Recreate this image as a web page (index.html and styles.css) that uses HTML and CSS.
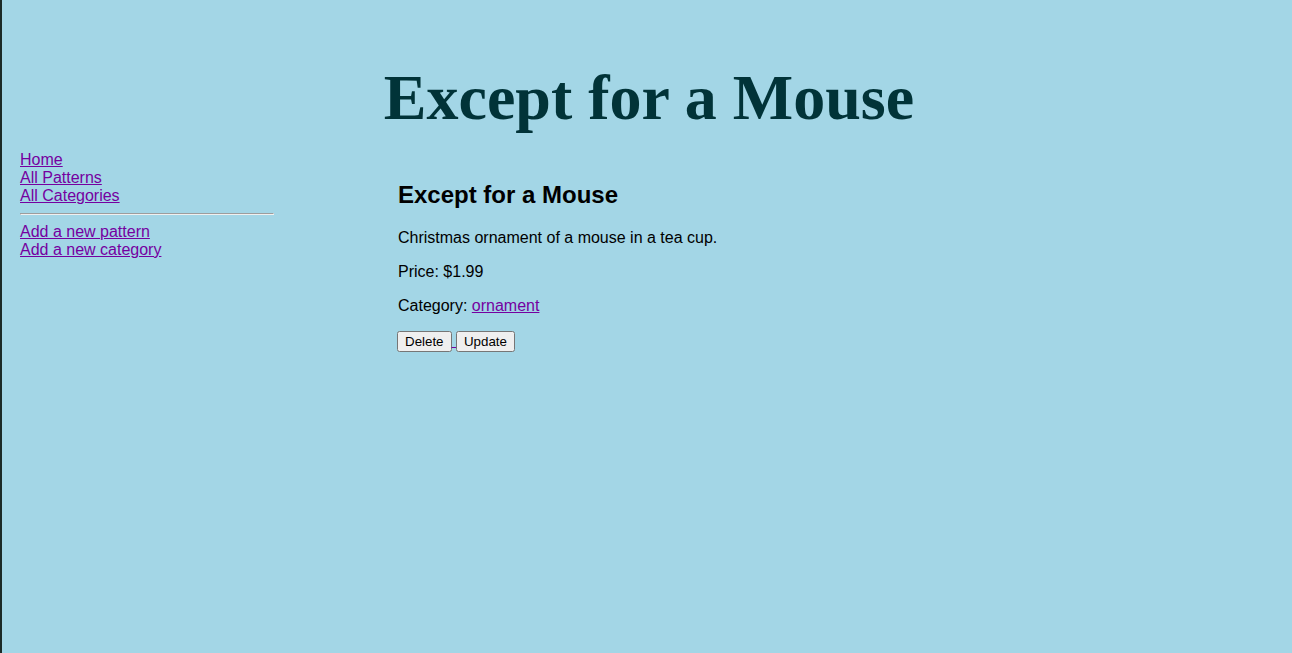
FILE: index.html
```html
<!DOCTYPE html>
<html lang="en">
<head>
<meta charset="utf-8">
<title>Except for a Mouse</title>
<link rel="stylesheet" href="styles.css">
</head>
<body>
<header class="site-header">
  <h1 class="site-title">Except for a Mouse</h1>
</header>
<div class="layout">
  <nav class="sidebar">
    <a class="nav-link" href="#">Home</a>
    <a class="nav-link" href="#">All Patterns</a>
    <a class="nav-link" href="#">All Categories</a>
    <hr class="nav-rule">
    <a class="nav-link" href="#">Add a new pattern</a>
    <a class="nav-link" href="#">Add a new category</a>
  </nav>
  <main class="content">
    <h2 class="pattern-title">Except for a Mouse</h2>
    <p class="pattern-text">Christmas ornament of a mouse in a tea cup.</p>
    <p class="pattern-text">Price: $1.99</p>
    <p class="pattern-text">Category: <a class="link" href="#">ornament</a></p>
    <div class="actions"><button class="btn" type="button">Delete</button><a class="link" href="#"> <button class="btn" type="button">Update</button></a></div>
  </main>
</div>
</body>
</html>
```

FILE: styles.css
```css
html {
  background: #a3d6e6;
  min-height: 100%;
}
body {
  margin: 0;
  min-height: 653px;
  border-left: 2px solid #1c2a27;
  font-family: "Liberation Sans", Arial, sans-serif;
  font-size: 16px;
  color: #000;
}
.site-header {
  text-align: center;
  padding-left: 4px;
}
.site-title {
  margin: 61px 0 15px;
  font-family: "Liberation Serif", "Times New Roman", serif;
  font-size: 64px;
  font-weight: bold;
  color: #013338;
}
.layout {
  display: grid;
  grid-template-columns: 254px 1fr;
  column-gap: 124px;
  padding-left: 18px;
}
.sidebar {
  display: flex;
  flex-direction: column;
  align-items: flex-start;
  padding-top: 1px;
}
.nav-link, .link {
  color: #7500a0;
  text-decoration: underline;
}
.nav-rule {
  align-self: stretch;
  margin: 8px 0;
  height: 0;
  border-style: solid;
  border-width: 1px;
  border-color: #9d9d9d #f0f0f0 #f0f0f0 #9d9d9d;
}
.content {
  padding-top: 11px;
}
.pattern-title {
  margin: 20px 0;
  font-size: 24px;
  font-weight: bold;
}
.pattern-text {
  margin: 16px 0;
}
.actions {
  margin-left: -1px;
}
.btn {
  font-family: "Liberation Sans", Arial, sans-serif;
  font-size: 13.333px;
}
```
